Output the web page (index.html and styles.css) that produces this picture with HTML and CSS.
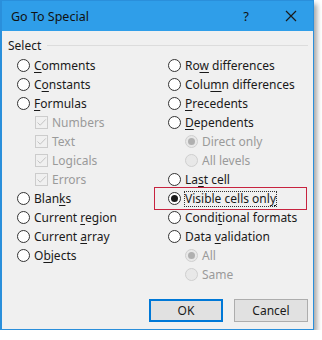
FILE: index.html
```html
<!DOCTYPE html>
<html>
<head>
<meta charset="utf-8">
<link rel="stylesheet" href="styles.css">
</head>
<body>
<div class="dialog">
  <div class="titlebar">
    <span class="title">Go To Special</span>
    <span class="help">?</span>
    <svg class="close" width="12" height="12" viewBox="0 0 12 12"><path d="M1 1L11 11M11 1L1 11" stroke="#1a1a1a" stroke-width="1.2" fill="none"/></svg>
  </div>
  <div class="content">
    <div class="legend"><span>Select</span><span class="rule"></span></div>
    <div class="cols">
      <div class="col left">
        <div class="row"><span class="radio"></span><span><u>C</u>omments</span></div>
        <div class="row"><span class="radio"></span><span>C<u>o</u>nstants</span></div>
        <div class="row"><span class="radio"></span><span><u>F</u>ormulas</span></div>
        <div class="row sub dis"><span class="check"><svg width="13" height="13" viewBox="0 0 13 13"><path d="M2.5 6.5L5.2 9.2L10.8 3.4" stroke="#c4c4c4" stroke-width="1" fill="none"/></svg></span><span>Numbers</span></div>
        <div class="row sub dis"><span class="check"><svg width="13" height="13" viewBox="0 0 13 13"><path d="M2.5 6.5L5.2 9.2L10.8 3.4" stroke="#c4c4c4" stroke-width="1" fill="none"/></svg></span><span>Text</span></div>
        <div class="row sub dis"><span class="check"><svg width="13" height="13" viewBox="0 0 13 13"><path d="M2.5 6.5L5.2 9.2L10.8 3.4" stroke="#c4c4c4" stroke-width="1" fill="none"/></svg></span><span>Logicals</span></div>
        <div class="row sub dis"><span class="check"><svg width="13" height="13" viewBox="0 0 13 13"><path d="M2.5 6.5L5.2 9.2L10.8 3.4" stroke="#c4c4c4" stroke-width="1" fill="none"/></svg></span><span>Errors</span></div>
        <div class="row"><span class="radio"></span><span>Blan<u>k</u>s</span></div>
        <div class="row"><span class="radio"></span><span>Current <u>r</u>egion</span></div>
        <div class="row"><span class="radio"></span><span>Current <u>a</u>rray</span></div>
        <div class="row"><span class="radio"></span><span>O<u>b</u>jects</span></div>
      </div>
      <div class="col right">
        <div class="row"><span class="radio"></span><span>Ro<u>w</u> differences</span></div>
        <div class="row"><span class="radio"></span><span>Colu<u>m</u>n differences</span></div>
        <div class="row"><span class="radio"></span><span><u>P</u>recedents</span></div>
        <div class="row"><span class="radio"></span><span><u>D</u>ependents</span></div>
        <div class="row subr dis"><span class="radio on"></span><span>Direct only</span></div>
        <div class="row subr dis"><span class="radio"></span><span>All levels</span></div>
        <div class="row"><span class="radio"></span><span>La<u>s</u>t cell</span></div>
        <div class="row"><span class="radio on"></span><span class="focus">Visible cells onl<u>y</u></span></div>
        <div class="row"><span class="radio"></span><span>Condi<u>t</u>ional formats</span></div>
        <div class="row"><span class="radio"></span><span>Data <u>v</u>alidation</span></div>
        <div class="row subr dis"><span class="radio on"></span><span>All</span></div>
        <div class="row subr dis"><span class="radio"></span><span>Same</span></div>
      </div>
    </div>
    <div class="buttons">
      <span class="btn default">OK</span>
      <span class="btn">Cancel</span>
    </div>
    <div class="highlight"></div>
  </div>
</div>
</body>
</html>
```

FILE: styles.css
```css
html, body {
  margin: 0;
  padding: 0;
  background: #ffffff;
}
body {
  font-family: "Noto Sans", "Open Sans", sans-serif;
  font-size: 12px;
  color: #1a1a1a;
}
.dialog {
  position: relative;
  width: 311px;
  height: 328px;
  border: 1px solid #2a8fdb;
  border-left-width: 2px;
  background: #f0f0f0;
  box-shadow: 3px 4px 5px rgba(0, 0, 0, 0.35);
}
.titlebar {
  height: 30px;
  background: #2f9ee9;
  display: flex;
  align-items: center;
  padding-left: 9px;
}
.title {
  font-size: 12.5px;
  color: #111;
  flex: 1;
}
.help {
  font-size: 13px;
  color: #111;
  margin-right: 36px;
}
.close {
  margin-right: 16px;
}
.content {
  position: relative;
  height: 298px;
}
.legend {
  display: flex;
  align-items: center;
  padding: 5px 5px 0 6px;
  height: 18px;
}
.legend .rule {
  flex: 1;
  height: 1px;
  background: #dcdcdc;
  margin-left: 6px;
  margin-top: 1px;
}
.cols {
  display: flex;
  padding-top: 2px;
}
.col {
  display: flex;
  flex-direction: column;
}
.col.left {
  width: 151px;
  padding-left: 15px;
}
.row {
  height: 19px;
  display: flex;
  align-items: center;
  white-space: nowrap;
}
.row u {
  text-decoration-thickness: 1px;
  text-underline-offset: 2px;
}
.radio {
  width: 11px;
  height: 11px;
  border: 1px solid #333;
  border-radius: 50%;
  background: #fff;
  margin-right: 4px;
  position: relative;
  flex: none;
}
.radio.on::after {
  content: "";
  position: absolute;
  left: 2px;
  top: 2px;
  width: 7px;
  height: 7px;
  border-radius: 50%;
  background: #1a1a1a;
}
.dis {
  color: #9a9a9a;
}
.dis .radio {
  border-color: #cfcfcf;
  background: #e8e8e8;
}
.dis .radio.on::after {
  background: #b0b0b0;
}
.sub {
  padding-left: 18px;
}
.subr {
  padding-left: 17px;
}
.check {
  width: 13px;
  height: 13px;
  box-sizing: border-box;
  border: 1px solid #cccccc;
  background: #f0f0f0;
  margin-right: 4px;
  flex: none;
  display: flex;
}
.check svg {
  margin: -1px;
}
.focus {
  outline: 1px dotted #333;
  outline-offset: 0px;
  line-height: 14px;
}
.buttons {
  display: flex;
  justify-content: flex-end;
  gap: 11px;
  padding-right: 5px;
  margin-top: 15px;
}
.btn {
  width: 74px;
  height: 23px;
  box-sizing: border-box;
  border: 1px solid #adadad;
  background: #e1e1e1;
  display: flex;
  align-items: center;
  justify-content: center;
}
.btn.default {
  border: 2px solid #0078d7;
}
.highlight {
  position: absolute;
  left: 152px;
  top: 156px;
  width: 151px;
  height: 21px;
  border: 1px solid #c7233f;
}
```
